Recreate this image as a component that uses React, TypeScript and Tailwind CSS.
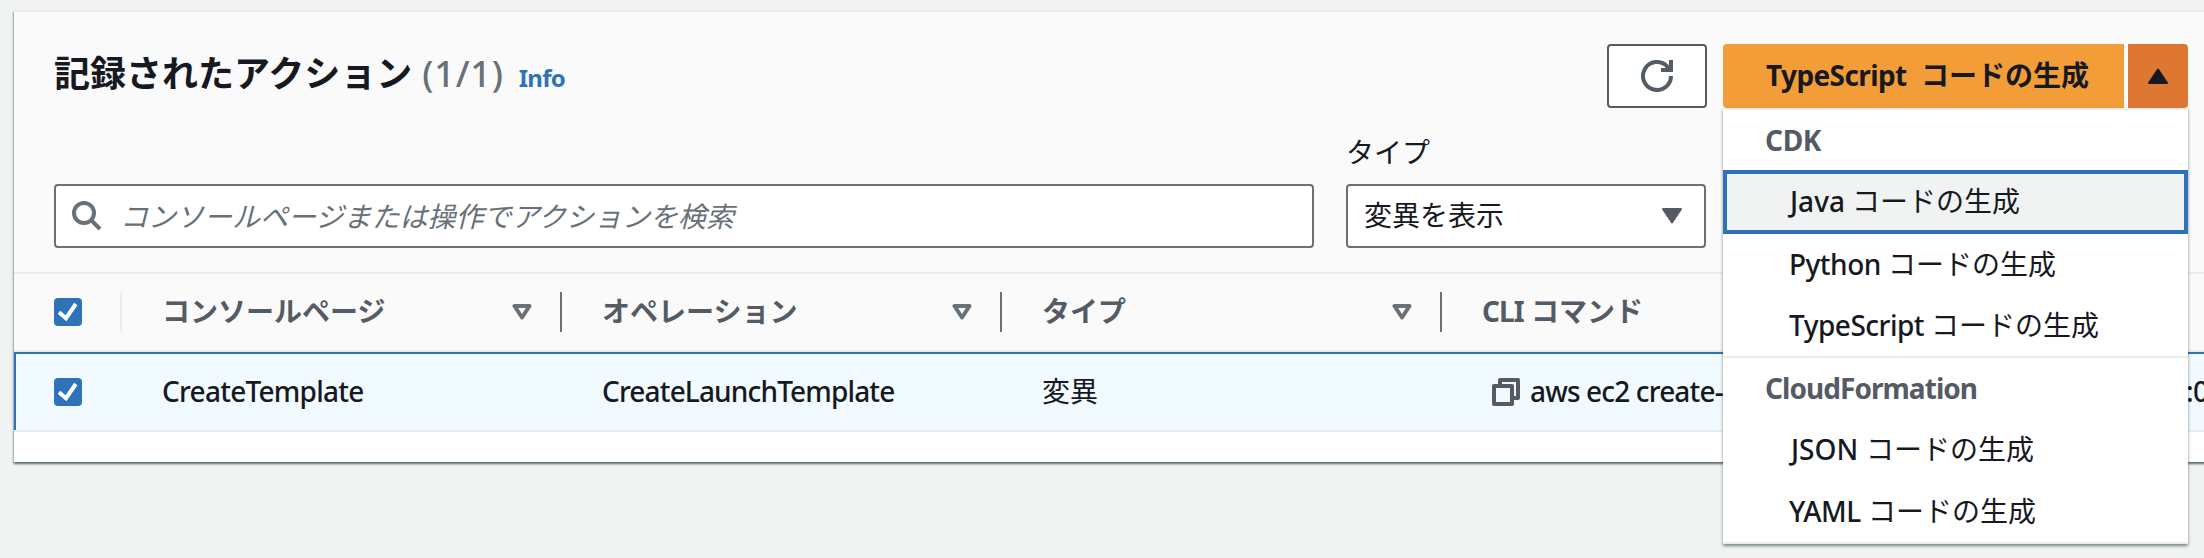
import React from "react";

const JP = "font-['Noto_Sans','Noto_Sans_CJK_JP',sans-serif]";

function Check() {
  return (
    <span className="block h-7 w-7 shrink-0 rounded-[4px] bg-[#2e73b8]">
      <svg viewBox="0 0 28 28" className="h-7 w-7" fill="none" stroke="#fff" strokeWidth="4">
        <path d="M5 14.2 L12 20.2 L21.8 6" />
      </svg>
    </span>
  );
}

function SortIcon() {
  return (
    <svg viewBox="0 0 20 16" className="h-4 w-5" fill="none" stroke="#687078" strokeWidth="4" strokeLinejoin="round">
      <path d="M2.5 2 H17.5 L10 13.5 Z" />
    </svg>
  );
}

function HeaderCell({ label, width, last }: { label: React.ReactNode; width: string; last?: boolean }) {
  return (
    <div className={`flex h-10 items-center justify-between pl-10 ${width} ${last ? "" : "border-r-2 border-[#687078] pr-[28px]"}`}>
      <span className="flex pb-[2px] font-bold text-[#545b64]">{label}</span>
      {!last && <SortIcon />}
    </div>
  );
}

function MenuItem({ lang, langClass, active, height }: { lang: string; langClass: string; active?: boolean; height: string }) {
  return (
    <div
      className={`flex items-center whitespace-pre ${height} ${
        active ? "border-4 border-[#2e73b8] bg-[#f1f3f3] pb-[2px] pl-[62px]" : "pl-[66px]"
      }`}
    >
      <span className={`shrink-0 font-medium ${langClass}`}>{lang}</span>
      <span>コードの生成</span>
    </div>
  );
}

export default function App() {
  return (
    <div className={`h-[558px] w-[2204px] overflow-hidden bg-[#f1f3f3] pl-[14px] pt-[10px] text-[28px] leading-[40px] text-[#16191f] ${JP}`}>
      <div className="flex h-[452px] w-[2230px] flex-col border-t-2 border-[#eaeded] bg-white shadow-[0_2px_2px_0_rgba(0,28,36,0.5),-1px_2px_2px_0_rgba(0,28,36,0.2)]">
        <div className="h-[260px] shrink-0 bg-[#fafafa] pl-10 pt-8">
          <div className="flex h-[64px] w-[2134px] justify-between">
            <div className="flex items-baseline pt-[8px]">
              <h1 className="flex whitespace-pre text-[36px] font-bold leading-[44px]">
                記録されたアクション
                <span className="ml-[10px] font-medium tracking-[0.8px] text-[#687078]">(1/1)</span>
              </h1>
              <a className="ml-[15px] text-[24px] font-bold tracking-[-0.7px] text-[#2e73b8]">Info</a>
            </div>
            <div className="flex">
              <button className="mr-4 flex h-16 w-[100px] items-center justify-center rounded-[4px] border-2 border-[#545b64] bg-white">
                <svg viewBox="0 0 32 32" className="h-8 w-8" fill="none" stroke="#545b64" strokeWidth="4">
                  <path d="M30 16 A14 14 0 1 1 26 6.2 L29 10" />
                  <path d="M30 0 V10 H20" />
                </svg>
              </button>
              <div className="relative flex gap-1">
                <button className="flex h-16 w-[401px] items-center rounded-l-[4px] bg-[#f29d38] pb-[2px] pl-[43px] font-bold">
                  <span className="w-[155px] shrink-0 text-left tracking-[-0.6px]">TypeScript</span>
                  <span className="whitespace-pre">コードの生成</span>
                </button>
                <button className="flex h-16 w-[60px] items-center justify-center rounded-r-[4px] bg-[#dd7732]">
                  <svg viewBox="0 0 20 16" className="h-4 w-5" fill="#16191f" stroke="#16191f" strokeWidth="2" strokeLinejoin="round">
                    <path d="M10 1.5 L19 15 H1 Z" />
                  </svg>
                </button>
                <div className="absolute left-0 top-16 z-10 flex h-[436px] w-[465px] flex-col border-y-2 border-[#eaeded] bg-white shadow-[0_2px_3px_0_rgba(0,28,36,0.5)]">
                  <div className="flex h-[60px] items-center pl-[42px] font-bold tracking-[-0.3px] text-[#545b64]">CDK</div>
                  <MenuItem lang="Java" langClass="w-[63px] pl-px" active height="h-16" />
                  <MenuItem lang="Python" langClass="w-[99px] tracking-[-0.5px]" height="h-[60px]" />
                  <MenuItem lang="TypeScript" langClass="w-[142px] tracking-[-0.5px]" height="h-[62px]" />
                  <div className="flex h-[62px] items-center border-t-2 border-[#eaeded] pb-px pl-[42px] font-bold tracking-[-0.95px] text-[#545b64]">CloudFormation</div>
                  <MenuItem lang="JSON" langClass="w-[77px] pl-[2px]" height="h-[62px]" />
                  <MenuItem lang="YAML" langClass="w-[79px] tracking-[-0.5px]" height="h-[62px]" />
                </div>
              </div>
            </div>
          </div>
          <div className="mt-6 flex items-end gap-8">
            <div className="flex h-16 w-[1260px] items-center rounded-[4px] border-2 border-[#687078] bg-white pl-4 text-[#687078]">
              <svg viewBox="0 0 30 30" className="h-[30px] w-[30px]" fill="none" stroke="#687078" strokeWidth="4">
                <circle cx="12" cy="12" r="10" />
                <path d="M19 19 L28 28" />
              </svg>
              <span className="ml-[18px] pb-px italic">コンソールページまたは操作でアクションを検索</span>
            </div>
            <div className="flex flex-col">
              <label className="mb-3">タイプ</label>
              <div className="flex h-16 w-[360px] items-center justify-between rounded-[4px] border-2 border-[#687078] bg-white pl-4 pr-[22px]">
                <span className="pb-[2px]">変異を表示</span>
                <svg viewBox="0 0 20 16" className="h-4 w-5" fill="#545b64" stroke="#545b64" strokeWidth="2" strokeLinejoin="round">
                  <path d="M1 1 H19 L10 14.5 Z" />
                </svg>
              </div>
            </div>
          </div>
        </div>
        <div className="flex h-20 shrink-0 items-center border-y-2 border-[#eaeded] bg-[#fafafa] pl-10">
          <div className="flex h-10 w-[68px] items-center border-r-2 border-[#eaeded]">
            <Check />
          </div>
          <HeaderCell label="コンソールページ" width="w-[440px]" />
          <HeaderCell label="オペレーション" width="w-[440px]" />
          <HeaderCell label="タイプ" width="w-[440px]" />
          <HeaderCell
            label={
              <>
                <span className="w-[49px] tracking-[-1px]">CLI</span>コマンド
              </>
            }
            width="w-[700px]"
            last
          />
        </div>
        <div className="flex h-[80px] shrink-0 items-center whitespace-pre border-b-2 border-[#eaeded] bg-[#f1fafe]">
          <div className="flex h-[78px] w-full items-center border-l-2 border-t-2 border-[#2e73b8] pl-[38px]">
            <div className="w-[108px]"><Check /></div>
            <div className="w-[440px] pb-[2px] font-medium tracking-[-0.75px]">CreateTemplate</div>
            <div className="w-[440px] pb-[2px] font-medium tracking-[-0.85px]">CreateLaunchTemplate</div>
            <div className="w-[440px] pb-[2px]">変異</div>
            <div className="flex w-[750px] items-center pl-[10px]">
              <svg viewBox="0 0 28 28" className="h-7 w-7" fill="none" stroke="#545b64" strokeWidth="4" strokeLinejoin="round">
                <path d="M2 8 H20 V26 H2 Z" />
                <path d="M8 8 V2 H26 V20 H20" />
              </svg>
              <span className="ml-[10px] w-[656px] shrink-0 pb-[2px] font-medium tracking-[-0.85px]">aws ec2 create-</span>
              <span className="pb-[2px] font-medium tracking-[-0.5px]">:0</span>
            </div>
          </div>
        </div>
      </div>
    </div>
  );
}
